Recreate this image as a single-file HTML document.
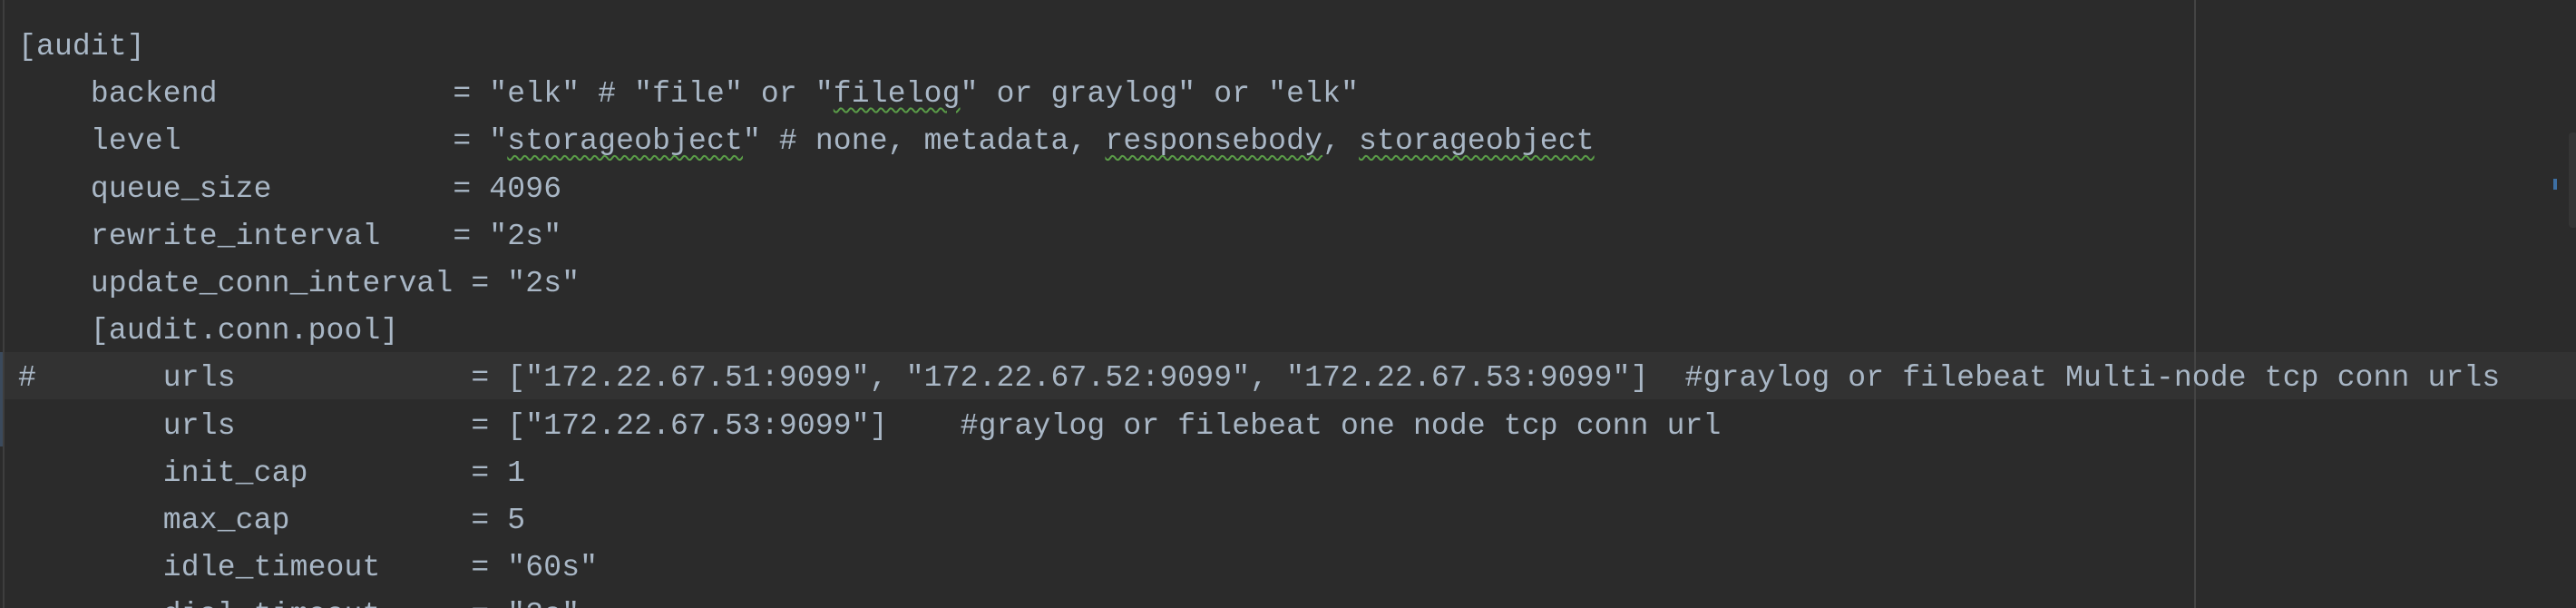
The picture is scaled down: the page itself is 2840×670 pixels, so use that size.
<!DOCTYPE html>
<html><head><meta charset="utf-8"><style>
html,body{margin:0;padding:0;background:#2b2b2b;width:2840px;height:670px;overflow:hidden;position:relative}
pre{margin:0;position:absolute;left:20px;top:26px;font-family:"Liberation Mono",monospace;font-size:33px;letter-spacing:0.17px;line-height:52.2px;color:#a9b7c6;white-space:pre}
.hl{position:absolute;left:0;top:388px;width:2840px;height:52px;background:#323232}
.sq{text-decoration:underline wavy #5a9c48;text-decoration-thickness:2px;text-underline-offset:6px}
.g{position:absolute;left:3px;top:0;width:2px;height:670px;background:#3e3e3e}
.r{position:absolute;left:2419px;top:0;width:2px;height:670px;background:#444}
.thumb{position:absolute;left:2832px;top:146px;width:10px;height:105px;background:#353535;border-radius:4px}
.mk{position:absolute;left:2815px;top:197px;width:4px;height:12px;background:#3d6fa3}
.cb{position:absolute;left:0;top:388px;width:3px;height:104px;background:#3b4a5c}
</style></head><body>
<div class="hl"></div><div class="g"></div><div class="cb"></div><div class="r"></div><div class="thumb"></div><div class="mk"></div>
<pre>[audit]
    backend             = "elk" # "file" or "<span class="sq">filelog</span>" or graylog" or "elk"
    level               = "<span class="sq">storageobject</span>" # none, metadata, <span class="sq">responsebody</span>, <span class="sq">storageobject</span>
    queue_size          = 4096
    rewrite_interval    = "2s"
    update_conn_interval = "2s"
    [audit.conn.pool]
#       urls             = ["172.22.67.51:9099", "172.22.67.52:9099", "172.22.67.53:9099"]  #graylog or filebeat Multi-node tcp conn urls
        urls             = ["172.22.67.53:9099"]    #graylog or filebeat one node tcp conn url
        init_cap         = 1
        max_cap          = 5
        idle_timeout     = "60s"
        dial_timeout     = "3s"
</pre>
</body></html>
